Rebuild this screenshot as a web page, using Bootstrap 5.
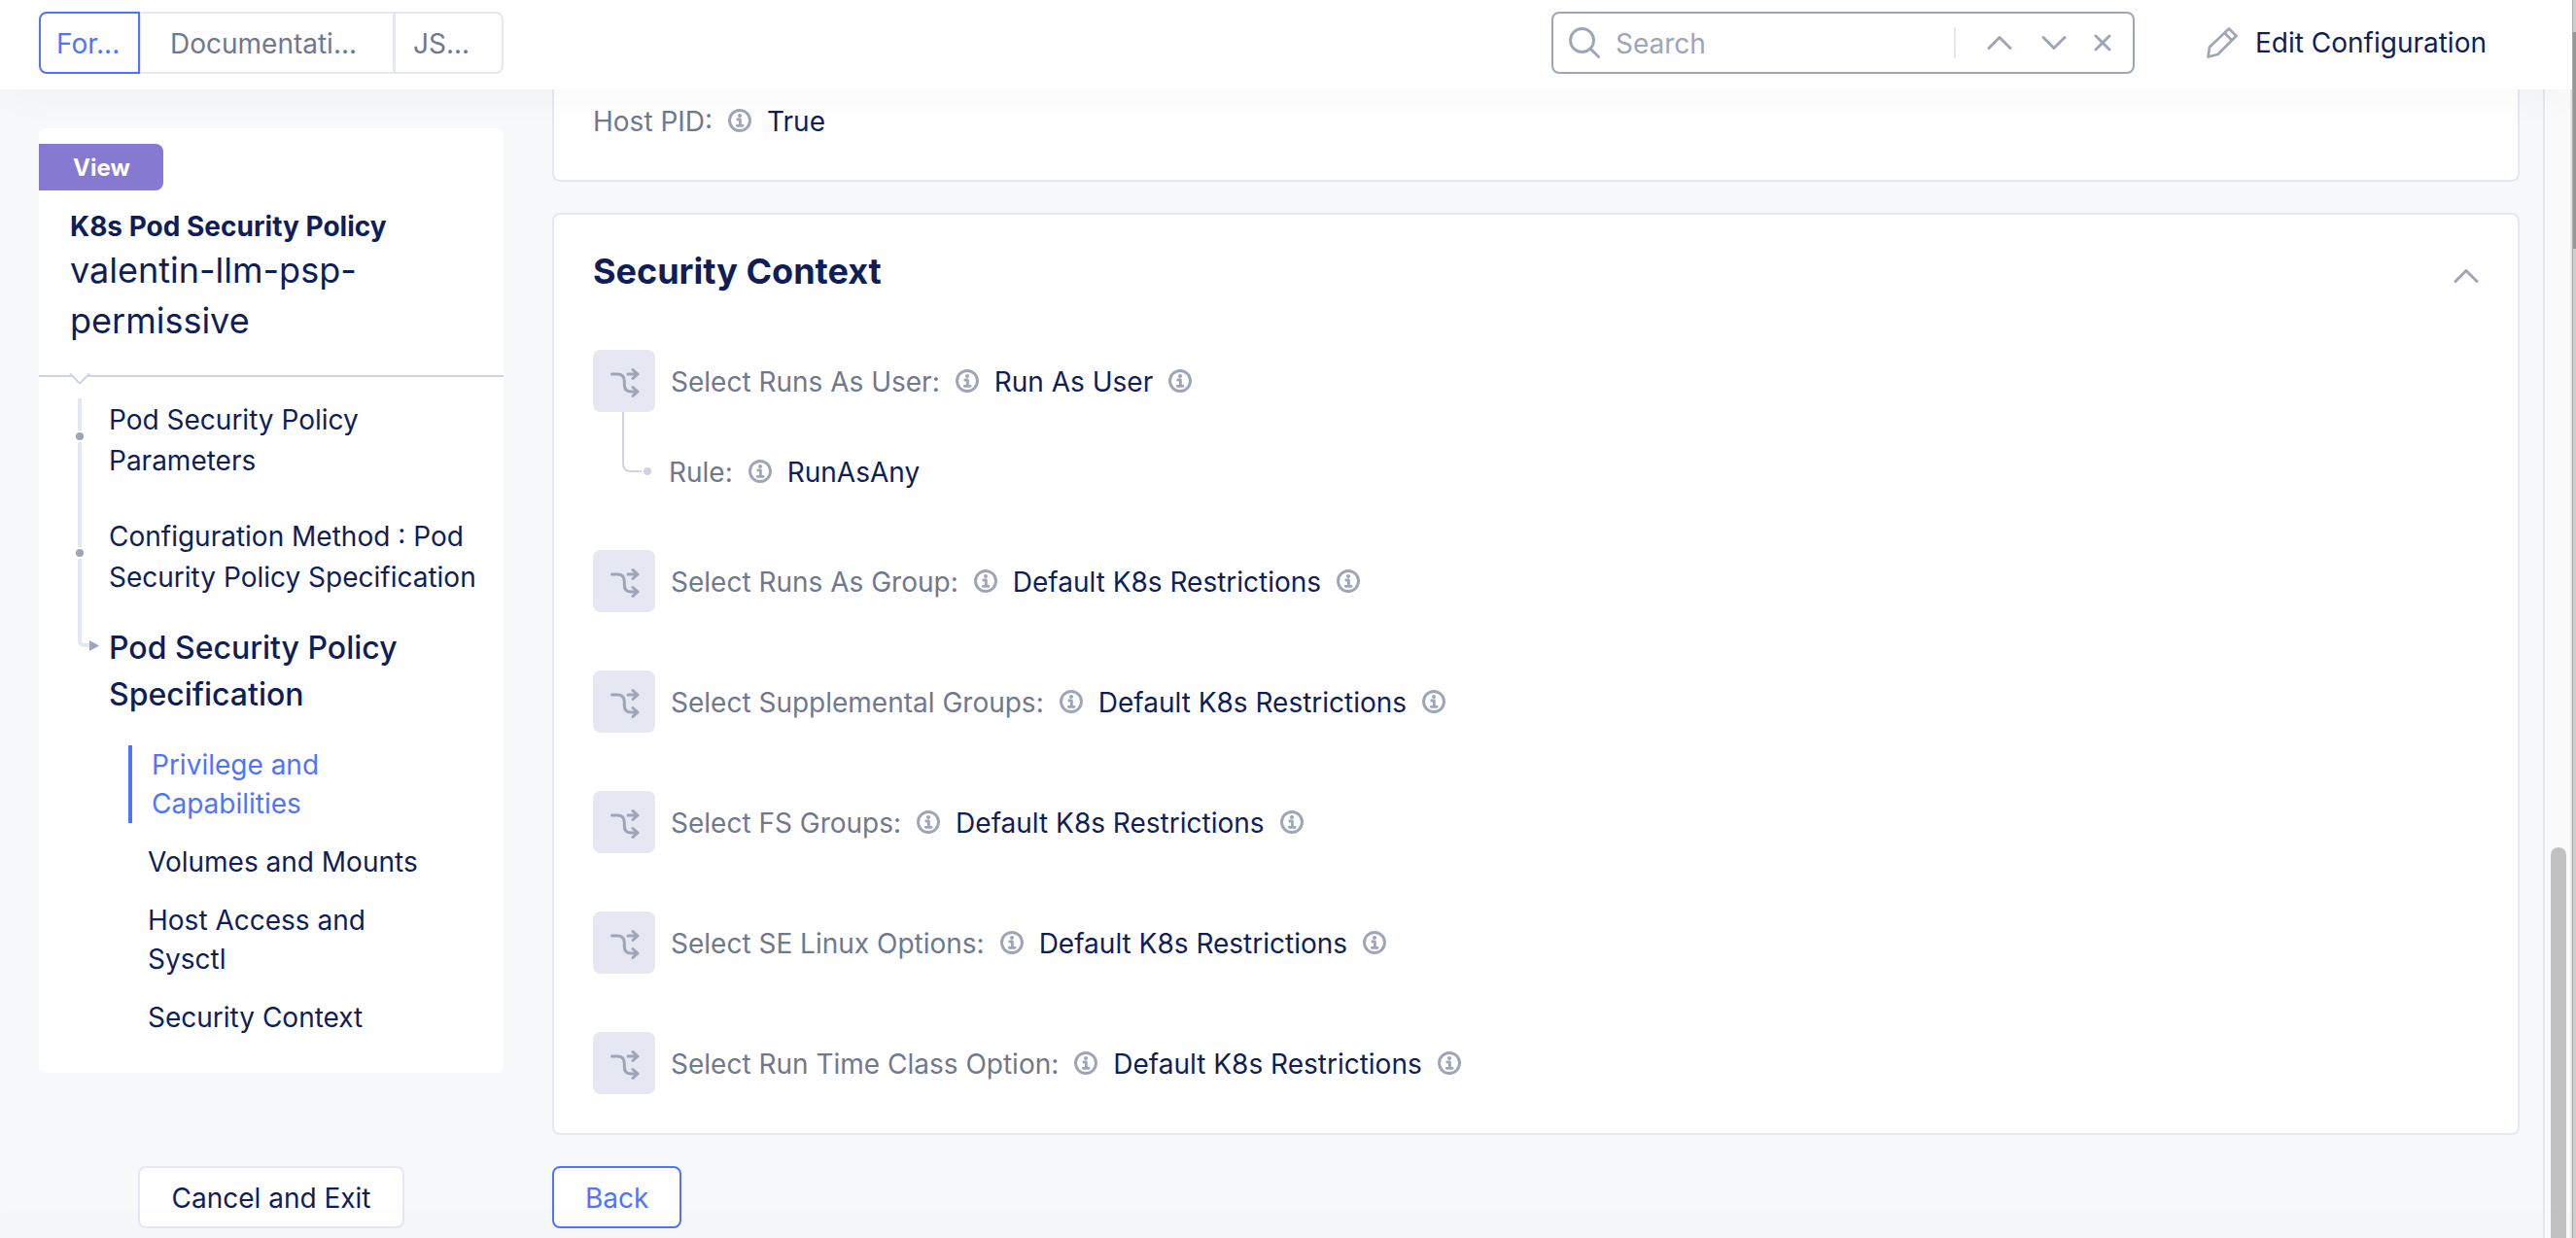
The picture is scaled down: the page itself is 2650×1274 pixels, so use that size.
<!DOCTYPE html>
<html lang="en">
<head>
<meta charset="utf-8">
<meta name="viewport" content="width=device-width, initial-scale=1">
<title>K8s Pod Security Policy</title>
<link href="https://cdn.jsdelivr.net/npm/bootstrap@5.3.0/dist/css/bootstrap.min.css" rel="stylesheet">
<style>
  :root {
    --navy: #0f1e57;
    --slate: #6f788e;
    --icon: #9da5b7;
    --line: #e5e8f2;
    --line-dark: #cfd3e3;
    --blue: #4f73ff;
    --purple: #8579d1;
    --page: #f7f8fa;
  }
  html, body { height: 100%; }
  body {
    background: var(--page);
    color: var(--navy);
    font-family: Inter, "Liberation Sans", sans-serif;
    font-size: 28px;
    line-height: 40px;
    overflow: hidden;
  }
  a { color: inherit; text-decoration: none; }
  svg { display: block; flex: none; fill: none; stroke: var(--icon); stroke-linecap: round; stroke-linejoin: round; }
  .btn {
    --bs-btn-font-size: 28px;
    --bs-btn-line-height: 40px;
    --bs-btn-padding-x: 32px;
    --bs-btn-border-width: 2px;
    --bs-btn-border-radius: 8px;
    --bs-btn-bg: #fff;
    --bs-btn-color: var(--navy);
    --bs-btn-border-color: var(--line);
    padding-top: 11px;
    padding-bottom: 9px;
  }
  .btn-bare { --bs-btn-padding-x: 0; --bs-btn-border-width: 0; --bs-btn-bg: transparent; padding-top: 0; padding-bottom: 0; }
  .btn-blue { --bs-btn-color: var(--blue); --bs-btn-border-color: var(--blue); }

  .topbar { background: #fff; padding: 12px 88px 16px 40px; z-index: 5; box-shadow: 0 16px 40px -8px rgba(0, 0, 0, .03); }
  .side-width { width: 478px; flex: none; }
  .view-tabs .btn { --bs-btn-color: var(--slate); text-align: left; white-space: nowrap; }
  .view-tabs .btn.btn-blue { --bs-btn-color: var(--blue); z-index: 1; }
  .view-tabs .tab-form { padding-left: 16px; padding-right: 0; flex: 0 0 104px; }
  .view-tabs .tab-docs { padding-left: 30px; padding-right: 0; flex: 1 1 0; }
  .view-tabs .tab-json { padding-left: 18px; padding-right: 0; flex: 0 0 113px; }
  .finder { width: 600px; height: 64px; border: 2px solid var(--icon); border-radius: 8px; padding: 0 22px 0 16px; }
  .finder .form-control { font-size: 28px; line-height: 40px; padding: 2px 0 0; border: 0; background: none; box-shadow: none; color: var(--navy); }
  .finder .form-control::placeholder { color: var(--icon); }
  .finder-rule { width: 2px; height: 32px; background: var(--line); flex: none; }
  .find-prev { margin-left: 32px; }
  .find-next { margin-left: 30px; }
  .find-clear { margin-left: 28px; }
  .edit-link { margin-left: 74px; gap: 18px; }

  .workspace { padding: 0 24px 0 40px; gap: 50px; }
  .side-card { background: #fff; border-radius: 8px; margin-top: 40px; }
  .side-head { padding-top: 16px; border-bottom: 2px solid var(--line-dark); }
  .tag-view { display: inline-block; background: var(--purple); color: #fff; font-weight: 700; font-size: 24px; line-height: 46px; padding: 2px 34px 0 35px; border-radius: 0 8px 8px 0; }
  .kind { font-weight: 700; font-size: 28px; line-height: 38px; }
  .obj-name { font-size: 36px; line-height: 52px; }
  .side-title { padding: 18px 32px 30px; }
  .notch { left: 30px; top: 100%; margin-top: -2px; }
  .steps { padding: 23px 0 37px; }
  .step { padding-left: 72px; line-height: 42px; }
  .step + .step { margin-top: 36px; }
  .step.step-on { margin-top: 28px; font-size: 32px; line-height: 48px; font-weight: 500; }
  .rail { left: 36px; top: 22px; }
  .subs { padding-left: 112px; margin-top: 28px; gap: 20px; }
  .subs a.on { margin-left: -20px; padding-left: 20px; border-left: 4px solid var(--blue); color: var(--blue); }

  .panel { background: #fff; border: 2px solid var(--line); border-radius: 8px; padding: 0 40px; }
  .panel-cut { border-top: 0; border-radius: 0 0 8px 8px; padding-top: 11px; padding-bottom: 40px; }
  .panel-main { margin-top: 32px; padding-top: 36px; padding-bottom: 40px; }
  .panel-main h2 { font-size: 36px; line-height: 44px; font-weight: 700; margin: 0 0 8px; }
  .panel-top .btn { margin-top: 2px; }
  .field { gap: 16px; }
  .field .key, .field .val { padding-top: 2px; }
  .field .key { color: var(--slate); }
  .picks { gap: 60px; margin-top: 51px; }
  .swap { width: 64px; height: 64px; border-radius: 8px; background: #e5e8f2; }
  .child { padding-left: 30px; height: 82px; gap: 18px; }
  .child .field { padding-top: 40px; }
  .foot { padding: 32px 24px 10px 40px; gap: 50px; }
  .fade-bottom { z-index: 4; height: 0; box-shadow: 0 -8px 40px 8px rgba(0, 0, 0, .025); }

  .track { width: 30px; flex: none; background: #fafafa; border: solid #e6e6e6; border-width: 0 2px; padding: 0 4px 0 6px; }
  .track-thumb { width: 16px; height: 34%; border-radius: 8px 8px 0 0; background: #c1c1c1; }
  .edge { width: 4px; flex: none; background: #cfcfcf; border-left: 1px solid #a8a8a8; padding-top: 33px; }
  .edge-thumb { height: 223px; background: #989898; }
</style>
<script src="https://cdn.jsdelivr.net/npm/bootstrap@5.3.0/dist/js/bootstrap.bundle.min.js"></script>
</head>
<body class="d-flex">

<svg class="d-none" aria-hidden="true">
  <symbol id="i-info" viewBox="0 0 24 24">
    <circle cx="12" cy="12" r="10.5" stroke-width="2.900"/>
    <circle cx="12" cy="6.900" r="2" fill="#9da5b7" stroke="none"/>
    <path d="M9.800 11h2.600v6M9.300 17.300h5.800" stroke-width="2.800"/>
  </symbol>
  <symbol id="i-swap" viewBox="0 0 64 64">
    <path stroke-width="3" d="M19.500 25h5.500c5 0 7.300 2 7.300 7v4c0 5 2.200 7 7 7H46M41 38.500 46 43l-5 4.500M36 25h10M41 20.500 46 25l-5 4.500"/>
  </symbol>
</svg>

<div class="d-flex flex-column flex-grow-1 overflow-hidden position-relative">
  <header class="topbar d-flex align-items-center position-relative">
    <div class="btn-group view-tabs side-width" role="group" aria-label="View mode">
      <button type="button" class="btn btn-blue tab-form">For...</button>
      <button type="button" class="btn tab-docs">Documentati...</button>
      <button type="button" class="btn tab-json">JS...</button>
    </div>
    <form class="finder d-flex align-items-center ms-auto" role="search">
      <label for="find" class="me-3"><svg width="32" height="32" viewBox="0 0 32 32" stroke-width="2.900"><circle cx="13.500" cy="13.500" r="12"/><path d="M22 22l8.500 8.500"/></svg></label>
      <input id="find" type="text" class="form-control" placeholder="Search">
      <span class="finder-rule"></span>
      <button type="button" class="btn btn-bare find-prev" aria-label="Previous"><svg width="26" height="16" viewBox="0 0 26 16" stroke-width="2.900"><path d="M2 13.500 13 2.500l11 11"/></svg></button>
      <button type="button" class="btn btn-bare find-next" aria-label="Next"><svg width="26" height="16" viewBox="0 0 26 16" stroke-width="2.900"><path d="M2 2.500l11 11 11-11"/></svg></button>
      <button type="button" class="btn btn-bare find-clear" aria-label="Clear"><svg width="18" height="18" viewBox="0 0 18 18" stroke-width="2.900"><path d="M2 2l14 14M16 2 2 16"/></svg></button>
    </form>
    <button type="button" class="btn btn-bare d-flex align-items-center edit-link">
      <svg width="32" height="32" viewBox="0 0 32 32" stroke-width="2.700"><path d="M1.500 30.500 3 20.500 23 1.500l7.500 7.500L11.500 28ZM18.500 6l7.500 7.500"/></svg>
      Edit Configuration
    </button>
  </header>

  <div class="d-flex flex-grow-1 overflow-hidden">
    <div class="flex-grow-1">
      <div class="workspace d-flex align-items-start">
        <aside class="side-card side-width">
          <div class="side-head position-relative">
            <span class="tag-view">View</span>
            <div class="side-title">
              <div class="kind">K8s Pod Security Policy</div>
              <div class="obj-name">valentin-llm-psp-permissive</div>
            </div>
            <svg class="notch position-absolute" width="24" height="14" viewBox="0 0 24 14"><path d="M2 0 12 10 22 0Z" fill="#fff" stroke="none"/><path d="M2.500 1 12 10.500 21.500 1" stroke="#cfd3e3" stroke-width="2"/></svg>
          </div>
          <nav class="steps position-relative">
            <svg class="rail position-absolute" width="44" height="270" viewBox="0 0 44 270">
              <path d="M6 0v33M6 45v108M6 165v84q0 5 5 5h8" stroke="#e5e8f2" stroke-width="4" stroke-linecap="butt"/>
              <circle cx="6" cy="39" r="4" fill="#9da5b7" stroke="none"/>
              <circle cx="6" cy="159" r="4" fill="#9da5b7" stroke="none"/>
              <path d="M16 249v11l10-5.500Z" fill="#9da5b7" stroke="none"/>
            </svg>
            <a class="step d-block" href="#">Pod Security Policy<br>Parameters</a>
            <a class="step d-block" href="#">Configuration Method : Pod<br>Security Policy Specification</a>
            <a class="step step-on d-block" href="#">Pod Security Policy<br>Specification</a>
            <div class="subs d-flex flex-column">
              <a class="on" href="#">Privilege and<br>Capabilities</a>
              <a href="#">Volumes and Mounts</a>
              <a href="#">Host Access and<br>Sysctl</a>
              <a href="#">Security Context</a>
            </div>
          </nav>
        </aside>

        <main class="flex-grow-1">
          <section class="panel panel-cut">
            <div class="field d-flex align-items-center"><span class="key">Host PID:</span><svg width="24" height="24"><use href="#i-info"/></svg><span class="val">True</span></div>
          </section>
          <section class="panel panel-main">
            <div class="panel-top d-flex align-items-center justify-content-between">
              <h2>Security Context</h2>
              <button type="button" class="btn btn-bare" aria-label="Collapse"><svg width="26" height="16" viewBox="0 0 26 16" stroke-width="2.900"><path d="M2 13.500 13 2.500l11 11"/></svg></button>
            </div>
            <div class="picks d-flex flex-column">
              <div>
                <div class="field d-flex align-items-center">
                  <span class="swap"><svg width="64" height="64"><use href="#i-swap"/></svg></span>
                  <span class="key">Select Runs As User:</span><svg width="24" height="24"><use href="#i-info"/></svg><span class="val">Run As User</span><svg width="24" height="24"><use href="#i-info"/></svg>
                </div>
                <div class="child d-flex">
                  <svg width="30" height="68" viewBox="0 0 30 68"><path d="M1 0v53q0 8 8 8h11" stroke="#cfd3e3" stroke-width="2" stroke-linecap="butt"/><circle cx="26" cy="61" r="4" fill="#cfd3e3" stroke="none"/></svg>
                  <div class="field d-flex align-items-center"><span class="key">Rule:</span><svg width="24" height="24"><use href="#i-info"/></svg><span class="val">RunAsAny</span></div>
                </div>
              </div>
              <div class="field d-flex align-items-center">
                <span class="swap"><svg width="64" height="64"><use href="#i-swap"/></svg></span>
                <span class="key">Select Runs As Group:</span><svg width="24" height="24"><use href="#i-info"/></svg><span class="val">Default K8s Restrictions</span><svg width="24" height="24"><use href="#i-info"/></svg>
              </div>
              <div class="field d-flex align-items-center">
                <span class="swap"><svg width="64" height="64"><use href="#i-swap"/></svg></span>
                <span class="key">Select Supplemental Groups:</span><svg width="24" height="24"><use href="#i-info"/></svg><span class="val">Default K8s Restrictions</span><svg width="24" height="24"><use href="#i-info"/></svg>
              </div>
              <div class="field d-flex align-items-center">
                <span class="swap"><svg width="64" height="64"><use href="#i-swap"/></svg></span>
                <span class="key">Select FS Groups:</span><svg width="24" height="24"><use href="#i-info"/></svg><span class="val">Default K8s Restrictions</span><svg width="24" height="24"><use href="#i-info"/></svg>
              </div>
              <div class="field d-flex align-items-center">
                <span class="swap"><svg width="64" height="64"><use href="#i-swap"/></svg></span>
                <span class="key">Select SE Linux Options:</span><svg width="24" height="24"><use href="#i-info"/></svg><span class="val">Default K8s Restrictions</span><svg width="24" height="24"><use href="#i-info"/></svg>
              </div>
              <div class="field d-flex align-items-center">
                <span class="swap"><svg width="64" height="64"><use href="#i-swap"/></svg></span>
                <span class="key">Select Run Time Class Option:</span><svg width="24" height="24"><use href="#i-info"/></svg><span class="val">Default K8s Restrictions</span><svg width="24" height="24"><use href="#i-info"/></svg>
              </div>
            </div>
          </section>
        </main>
      </div>
      <div class="foot d-flex">
        <div class="side-width text-center"><button type="button" class="btn">Cancel and Exit</button></div>
        <button type="button" class="btn btn-blue">Back</button>
      </div>
    </div>
    <div class="track d-flex align-items-end" aria-hidden="true"><div class="track-thumb"></div></div>
  </div>
  <div class="fade-bottom position-relative"></div>
</div>
<div class="edge" aria-hidden="true"><div class="edge-thumb"></div></div>

</body>
</html>
